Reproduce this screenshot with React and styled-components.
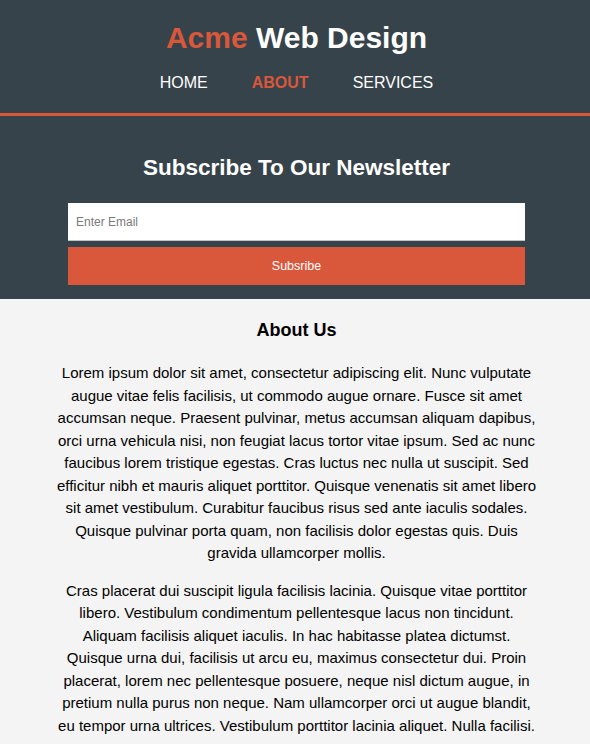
import React from "react";
import styled, { createGlobalStyle } from "styled-components";

const ORANGE = "#d9573a";
const DARK = "#37434a";

const Global = createGlobalStyle`
  html, body { margin: 0; padding: 0; }
  body {
    background: #f4f4f4;
    font: 15px/1.5 "Liberation Sans", Arial, Helvetica, sans-serif;
    color: #000;
  }
  * { box-sizing: border-box; }
`;

const Container = styled.div`
  width: ${(p) => p.$w + 3}px;
  margin: 0 auto;
  padding-left: 3px;
`;

const Header = styled.header`
  background: ${DARK};
  color: #fff;
  padding: 15px 0 18px;
  border-bottom: 3px solid ${ORANGE};
`;

const Brand = styled.h1`
  margin: 0;
  font-size: 30px;
  line-height: 45px;
  font-weight: bold;
  text-align: center;
`;

const Highlight = styled.span`
  color: ${ORANGE};
`;

const Nav = styled.nav`
  margin-top: 11px;
  display: flex;
  justify-content: center;
  gap: 44px;
`;

const NavLink = styled.a`
  color: ${(p) => (p.$current ? ORANGE : "#fff")};
  font-weight: ${(p) => (p.$current ? "bold" : "normal")};
  text-decoration: none;
  text-transform: uppercase;
  font-size: 16px;
  line-height: 24px;
`;

const Newsletter = styled.section`
  background: ${DARK};
  color: #fff;
  padding: 16px 0 14px;
`;

const NewsTitle = styled.h1`
  margin: 18px 0 17px;
  font-size: 22.5px;
  line-height: 36px;
  text-align: center;
`;

const Form = styled.form`
  display: flex;
  flex-direction: column;
  gap: 6px;
  margin: 0;
`;

const EmailInput = styled.input`
  height: 38px;
  width: 100%;
  border: none;
  border-bottom: 1px solid #c4c4c4;
  padding: 0 8px;
  font-family: "Liberation Sans", Arial, sans-serif;
  font-size: 12px;
  background: #fff;
  outline: none;
  &::placeholder { color: #7a7a7a; }
`;

const Button = styled.button`
  height: 38px;
  width: 100%;
  border: 0;
  background: ${ORANGE};
  color: #fff;
  font-family: "Liberation Sans", Arial, sans-serif;
  font-size: 12.5px;
  cursor: pointer;
`;

const Main = styled.main`
  padding-top: 18px;
`;

const AboutTitle = styled.h2`
  margin: 0 0 18px;
  font-size: 18px;
  line-height: 27px;
  text-align: center;
`;

const Para = styled.p`
  margin: 0 0 15px;
  text-align: center;
  line-height: 22.5px;
`;

export default function App() {
  return (
    <>
      <Global />
      <Header>
        <Container $w={480}>
          <Brand>
            <Highlight>Acme</Highlight> Web Design
          </Brand>
          <Nav>
            <NavLink href="#">Home</NavLink>
            <NavLink href="#" $current>About</NavLink>
            <NavLink href="#">Services</NavLink>
          </Nav>
        </Container>
      </Header>
      <Newsletter>
        <Container $w={457}>
          <NewsTitle>Subscribe To Our Newsletter</NewsTitle>
          <Form onSubmit={(e) => e.preventDefault()}>
            <EmailInput type="email" placeholder="Enter Email" />
            <Button type="submit">Subsribe</Button>
          </Form>
        </Container>
      </Newsletter>
      <Main>
        <Container $w={485}>
          <AboutTitle>About Us</AboutTitle>
          <Para>
            Lorem ipsum dolor sit amet, consectetur adipiscing elit. Nunc vulputate augue vitae felis facilisis, ut commodo augue ornare. Fusce sit amet accumsan neque. Praesent pulvinar, metus accumsan aliquam dapibus, orci urna vehicula nisi, non feugiat lacus tortor vitae ipsum. Sed ac nunc faucibus lorem tristique egestas. Cras luctus nec nulla ut suscipit. Sed efficitur nibh et mauris aliquet porttitor. Quisque venenatis sit amet libero sit amet vestibulum. Curabitur faucibus risus sed ante iaculis sodales. Quisque pulvinar porta quam, non facilisis dolor egestas quis. Duis gravida ullamcorper mollis.
          </Para>
          <Para>
            Cras placerat dui suscipit ligula facilisis lacinia. Quisque vitae porttitor libero. Vestibulum condimentum pellentesque lacus non tincidunt. Aliquam facilisis aliquet iaculis. In hac habitasse platea dictumst. Quisque urna dui, facilisis ut arcu eu, maximus consectetur dui. Proin placerat, lorem nec pellentesque posuere, neque nisl dictum augue, in pretium nulla purus non neque. Nam ullamcorper orci ut augue blandit, eu tempor urna ultrices. Vestibulum porttitor lacinia aliquet. Nulla facilisi.
          </Para>
        </Container>
      </Main>
    </>
  );
}
